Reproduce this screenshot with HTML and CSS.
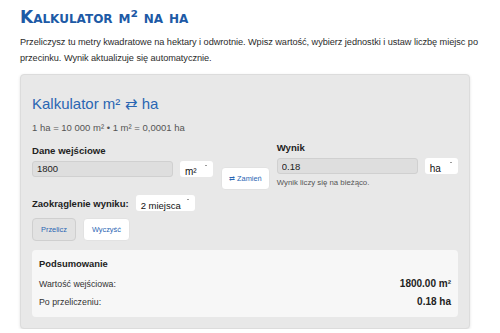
FILE: index.html
```html
<!DOCTYPE html>
<html lang="pl">
<head>
    <meta charset="UTF-8">
    <meta name="viewport" content="width=device-width, initial-scale=1.0">
    <title>Kalkulator m² na ha</title>
    <link rel="stylesheet" href="styles.css">
</head>
<body>
    <div class="page">
        <h1 class="page-title">Kalkulator m² na ha</h1>
        <p class="intro">Przeliczysz tu metry kwadratowe na hektary i odwrotnie. Wpisz wartość, wybierz jednostki i ustaw liczbę miejsc po przecinku. Wynik aktualizuje się automatycznie.</p>

        <div class="card">
            <h2 class="card-title">Kalkulator m² &#8644; ha</h2>
            <div class="hint">1 ha = 10 000 m² &bull; 1 m² = 0,0001 ha</div>

            <div class="convert-row">
                <div class="field field-input">
                    <label for="inputValue">Dane wejściowe</label>
                    <div class="field-line">
                        <input type="text" id="inputValue" class="value-input" value="1800">
                        <div class="unit-select">m²</div>
                    </div>
                </div>

                <button class="btn swap-btn">&#8644; Zamień</button>

                <div class="field">
                    <label for="outputValue">Wynik</label>
                    <div class="field-line">
                        <input type="text" id="outputValue" class="value-input" value="0.18" readonly>
                        <div class="unit-select">ha</div>
                    </div>
                    <div class="note">Wynik liczy się na bieżąco.</div>
                </div>
            </div>

            <div class="rounding">
                <span class="rounding-label">Zaokrąglenie wyniku:</span>
                <div class="unit-select wide">2 miejsca</div>
            </div>

            <div class="actions">
                <button class="btn btn-grey">Przelicz</button>
                <button class="btn">Wyczyść</button>
            </div>

            <div class="summary">
                <h3>Podsumowanie</h3>
                <div class="summary-row">
                    <span>Wartość wejściowa:</span>
                    <strong>1800.00 m²</strong>
                </div>
                <div class="summary-row">
                    <span>Po przeliczeniu:</span>
                    <strong>0.18 ha</strong>
                </div>
            </div>
        </div>
    </div>
</body>
</html>
```

FILE: styles.css
```css
/* General styles */
* {
    margin: 0;
    padding: 0;
    box-sizing: border-box;
}

body {
    font-family: 'Liberation Sans', Arial, sans-serif;
    background: #fff;
    color: #333;
}

.page {
    padding: 7px 20px 0;
    width: 500px;
}

.page-title {
    font-family: 'DejaVu Sans', Verdana, sans-serif;
    font-variant: small-caps;
    font-size: 17px;
    font-weight: bold;
    color: #1d5aa6;
    line-height: 20px;
}

.intro {
    margin-top: 8px;
    font-size: 9.2px;
    letter-spacing: -0.05px;
    line-height: 15.5px;
    color: #2b2b2b;
}

.card {
    margin-top: 8px;
    width: 450px;
    background: #e8e8e8;
    border: 1px solid #dcdcdc;
    border-radius: 4px;
    box-shadow: 0 1px 3px rgba(0, 0, 0, 0.12);
    padding: 20px 11px 11px;
}

.card-title {
    font-weight: normal;
    font-size: 15px;
    color: #2a66b3;
    line-height: 18px;
}

.hint {
    margin-top: 9px;
    font-size: 9.5px;
    line-height: 12px;
    color: #555;
}

/* Input / output row */
.convert-row {
    display: flex;
    align-items: flex-start;
    margin-top: 8px;
}

.field-input {
    margin-top: 2.5px;
}

.field label {
    display: block;
    font-weight: bold;
    font-size: 9.6px;
    color: #222;
    line-height: 12px;
}

.field-line {
    display: flex;
    align-items: center;
    gap: 7px;
    margin-top: 4px;
}

.value-input {
    width: 141px;
    height: 16px;
    background: #dedede;
    border: 1px solid #d0d0d0;
    border-radius: 3px;
    padding: 0 4px;
    font-family: inherit;
    font-size: 9.5px;
    color: #222;
    outline: none;
}

.unit-select {
    position: relative;
    height: 16px;
    width: 33px;
    background: #fff;
    border-radius: 3px;
    padding: 5px 0 0 5px;
    font-size: 10px;
    color: #111;
    line-height: 11px;
    overflow: hidden;
}

.unit-select::after {
    content: "";
    position: absolute;
    right: 6px;
    top: 4px;
    width: 2px;
    height: 1px;
    background: #999;
}

.unit-select.wide {
    width: 59px;
    font-size: 9.5px;
}

.note {
    margin-top: 4px;
    font-size: 7.8px;
    line-height: 10px;
    color: #555;
}

/* Buttons */
.btn {
    background: #fff;
    border: 1px solid #e2e2e2;
    border-radius: 4px;
    color: #2a66b3;
    font-family: inherit;
    font-size: 7.4px;
    padding: 0 7px;
    height: 23px;
}

.swap-btn {
    margin: 25px 7px 0 8px;
}

.btn-grey {
    background: #e2e2e2;
    border-color: #cfcfcf;
}

.rounding {
    display: flex;
    align-items: center;
    gap: 7px;
    margin-top: 5px;
}

.rounding-label {
    font-weight: bold;
    font-size: 9.5px;
    color: #222;
}

.actions {
    display: flex;
    gap: 7px;
    margin-top: 7px;
}

.actions .btn {
    padding: 0 8px;
}

/* Summary */
.summary {
    margin-top: 9px;
    background: #f7f7f7;
    border-radius: 4px;
    padding: 8px 7px 6px;
}

.summary h3 {
    font-size: 9.4px;
    color: #222;
    line-height: 12px;
}

.summary-row {
    display: flex;
    justify-content: space-between;
    align-items: baseline;
    font-size: 8.8px;
    line-height: 17px;
}

.summary h3 + .summary-row {
    margin-top: 5px;
}

.summary-row strong {
    font-size: 10px;
    color: #222;
}
```
